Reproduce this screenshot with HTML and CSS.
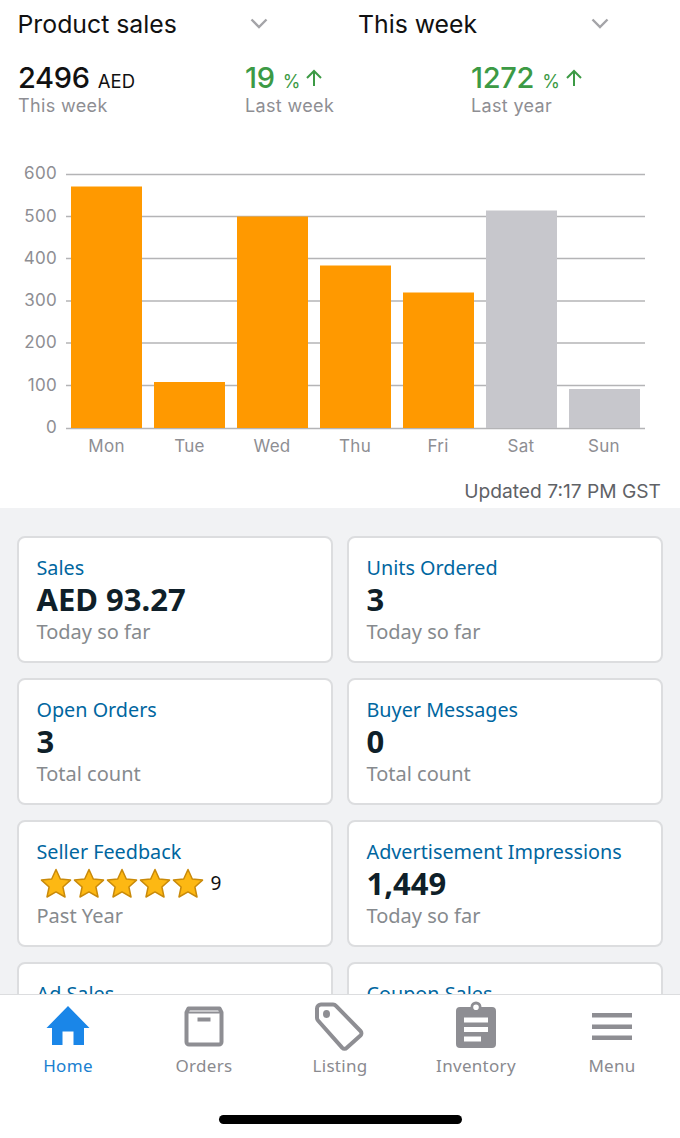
FILE: index.html
```html
<!DOCTYPE html>
<html lang="en">
<head>
<meta charset="utf-8">
<title>Seller dashboard</title>
<link rel="stylesheet" href="styles.css">
</head>
<body>
<div class="page">
  <section class="top">
    <div class="selectors">
      <div class="selector"><span>Product sales</span><svg class="chev" viewBox="0 0 18 11"><path d="M1.5 1.5 9 9l7.5-7.5" /></svg></div>
      <div class="selector"><span>This week</span><svg class="chev" viewBox="0 0 18 11"><path d="M1.5 1.5 9 9l7.5-7.5" /></svg></div>
    </div>
    <div class="stats">
      <div class="stat s1"><div class="num"><b>2496</b><small>AED</small></div><div class="cap">This week</div></div>
      <div class="stat s2 up"><div class="num"><b>19</b><small>%</small><svg class="arrow" viewBox="0 0 18 18"><path d="M9 17V2M2 9l7-7 7 7"/></svg></div><div class="cap">Last week</div></div>
      <div class="stat s3 up"><div class="num"><b>1272</b><small>%</small><svg class="arrow" viewBox="0 0 18 18"><path d="M9 17V2M2 9l7-7 7 7"/></svg></div><div class="cap">Last year</div></div>
    </div>
    <svg class="chart" viewBox="0 0 680 340" width="680" height="340">
      <g class="grid">
        <line x1="66" x2="645" y1="52.500" y2="52.500"/>
        <line x1="66" x2="645" y1="94.500" y2="94.500"/>
        <line x1="66" x2="645" y1="136.500" y2="136.500"/>
        <line x1="66" x2="645" y1="179" y2="179"/>
        <line x1="66" x2="645" y1="221" y2="221"/>
        <line x1="66" x2="645" y1="263.500" y2="263.500"/>
        <line x1="66" x2="645" y1="306.500" y2="306.500"/>
      </g>
      <g class="bars">
        <rect x="71" y="64.500" width="71" height="241.500"/>
        <rect x="154" y="260" width="71" height="46"/>
        <rect x="237" y="94.500" width="71" height="211.500"/>
        <rect x="320" y="143.500" width="71" height="162.500"/>
        <rect x="403" y="170.500" width="71" height="135.500"/>
        <rect class="future" x="486" y="88.500" width="71" height="217.500"/>
        <rect class="future" x="569" y="267" width="71" height="39"/>
      </g>
      <g class="ylabels">
        <text x="57" y="57">600</text><text x="57" y="100">500</text><text x="57" y="142">400</text><text x="57" y="184">300</text><text x="57" y="226">200</text><text x="57" y="269">100</text><text x="57" y="311">0</text>
      </g>
      <g class="xlabels">
        <text x="106.500" y="330">Mon</text><text x="189.500" y="330">Tue</text><text x="272" y="330">Wed</text><text x="355" y="330">Thu</text><text x="438" y="330">Fri</text><text x="521" y="330">Sat</text><text x="604" y="330">Sun</text>
      </g>
    </svg>
    <div class="updated">Updated 7:17 PM GST</div>
  </section>

  <main class="cards">
    <article class="card"><h2>Sales</h2><div class="value">AED 93.27</div><p>Today so far</p></article>
    <article class="card"><h2>Units Ordered</h2><div class="value">3</div><p>Today so far</p></article>
    <article class="card"><h2>Open Orders</h2><div class="value">3</div><p>Total count</p></article>
    <article class="card"><h2>Buyer Messages</h2><div class="value">0</div><p>Total count</p></article>
    <article class="card"><h2>Seller Feedback</h2>
      <div class="value stars">
        <svg class="star" viewBox="0 0 32 30"><path d="M16 1.500 20.300 11l10.200 1.100-7.600 6.900 2.100 10-9-5.100-9 5.100 2.100-10-7.600-6.900L11.700 11z"/></svg>
        <svg class="star" viewBox="0 0 32 30"><path d="M16 1.500 20.300 11l10.200 1.100-7.600 6.900 2.100 10-9-5.100-9 5.100 2.100-10-7.600-6.900L11.700 11z"/></svg>
        <svg class="star" viewBox="0 0 32 30"><path d="M16 1.500 20.300 11l10.200 1.100-7.600 6.900 2.100 10-9-5.100-9 5.100 2.100-10-7.600-6.900L11.700 11z"/></svg>
        <svg class="star" viewBox="0 0 32 30"><path d="M16 1.500 20.300 11l10.200 1.100-7.600 6.900 2.100 10-9-5.100-9 5.100 2.100-10-7.600-6.900L11.700 11z"/></svg>
        <svg class="star" viewBox="0 0 32 30"><path d="M16 1.500 20.300 11l10.200 1.100-7.600 6.900 2.100 10-9-5.100-9 5.100 2.100-10-7.600-6.900L11.700 11z"/></svg>
        <span class="count">9</span>
      </div><p>Past Year</p></article>
    <article class="card"><h2>Advertisement Impressions</h2><div class="value">1,449</div><p>Today so far</p></article>
    <article class="card"><h2>Ad Sales</h2></article>
    <article class="card"><h2>Coupon Sales</h2></article>
  </main>

  <nav class="tabs">
    <div class="tab active">
      <svg class="ico" viewBox="0 0 50 50"><path class="fill" d="M25 5 46.500 27H41V44H30.500V30.500H19.500V44H9V27H3.500z"/></svg>
      <span>Home</span></div>
    <div class="tab">
      <svg class="ico" viewBox="0 0 50 50"><path class="line" d="M9.500 7.500h31l2 4V41a2.500 2.500 0 0 1-2.500 2.500H10A2.500 2.500 0 0 1 7.500 41V11.500z"/><path class="line thin" d="M8 11.500h34"/><rect class="fill" x="18.500" y="16.500" width="13" height="4"/></svg>
      <span>Orders</span></div>
    <div class="tab">
      <svg class="ico" viewBox="0 0 50 50"><path class="line" d="M6.500 3.500h11.500a4 4 0 0 1 3 1.300l24.500 25.200a3.200 3.200 0 0 1 0 4.500L31.800 46.800a3.200 3.200 0 0 1-4.500 0L3 19.500a4 4 0 0 1-1-2.800V7.500A4 4 0 0 1 6.500 3.500z"/><ellipse class="fill" cx="11.500" cy="13" rx="3.500" ry="4"/></svg>
      <span>Listing</span></div>
    <div class="tab">
      <svg class="ico" viewBox="0 0 50 50"><path class="fill" fill-rule="evenodd" d="M9 6h10.500a5.500 5.500 0 0 1 11 0H41a4 4 0 0 1 4 4v33a4 4 0 0 1-4 4H9a4 4 0 0 1-4-4V10a4 4 0 0 1 4-4zM25 3.500a2.800 2.800 0 1 0 0 5.600 2.800 2.800 0 0 0 0-5.600zM13 16.500v5h24v-5zM13 26v5h24v-5zM13 35.500v5h17v-5z"/></svg>
      <span>Inventory</span></div>
    <div class="tab">
      <svg class="ico" viewBox="0 0 50 50"><path class="fill" d="M5 12h40v4.500H5zM5 23.500h40V28H5zM5 34.500h40V39H5z"/></svg>
      <span>Menu</span></div>
    <div class="homebar"></div>
  </nav>
</div>
</body>
</html>
```
FILE: styles.css
```css
* { box-sizing: border-box; }
html, body { margin: 0; padding: 0; background: #fff; }
.page {
  width: 680px; height: 1138px; overflow: hidden;
  display: flex; flex-direction: column;
  font-family: "Inter", "Liberation Sans", sans-serif;
}
.top { height: 508px; flex: none; background: #fff; }
.selectors { display: grid; grid-template-columns: 340.500px 340px; padding: 8px 0 0 17.500px; height: 62px; }
.selector { display: flex; align-items: flex-start; justify-content: space-between; width: 250.500px; font-size: 24.800px; line-height: 32px; color: #111; font-weight: 400; }
.chev { width: 18px; height: 11px; margin-top: 10px; flex: none; }
.chev path { fill: none; stroke: #a4a4a8; stroke-width: 2.4; }
.stats { display: grid; grid-template-columns: 227px 226px 200px; padding-left: 18px; }
.num { display: flex; align-items: baseline; height: 32px; line-height: 32px; color: #111; white-space: pre; }
.num b { font-weight: 500; font-size: 29px; letter-spacing: -0.3px; }
.num small { font-size: 18px; margin-left: 8px; font-weight: 400; }
.s1 .num small { font-size: 18.500px; }
.up .num { color: #3c9a45; }
.arrow { width: 18px; height: 18px; margin-left: 5px; align-self: center; flex: none; }
.arrow path { fill: none; stroke: #3c9a45; stroke-width: 2; }
.cap { font-size: 18px; line-height: 24px; color: #8e8e93; letter-spacing: 0.35px; }
.chart { display: block; margin-top: 4px; }
.grid line { stroke: #b4b4b6; stroke-width: 1.3; }
.bars rect { fill: #ff9900; }
.bars rect.future { fill: #c7c7cc; }
.ylabels text { font-size: 17px; letter-spacing: 0.3px; fill: #8e8e93; text-anchor: end; }
.xlabels text { font-size: 17px; letter-spacing: 0.3px; fill: #8e8e93; text-anchor: middle; }
.updated { text-align: right; padding-right: 19px; font-size: 19.200px; line-height: 24px; color: #5f6266; margin-top: 17px; font-weight: 400; }

.cards {
  flex: 1; min-height: 0; overflow: hidden; background: #f1f2f4;
  display: grid; grid-template-columns: 316px 316px; column-gap: 14px; row-gap: 15px;
  grid-auto-rows: 127px; padding: 28px 17px 0;
  font-family: "Noto Sans", "Open Sans", sans-serif;
}
.card { background: #fff; border: 2px solid #dcdddf; border-radius: 8px; padding: 18px 17.500px 0; }
.card h2 { margin: 0; font-size: 19.800px; font-weight: 400; line-height: 24px; color: #00669f; white-space: nowrap; }
.value { font-size: 31px; font-weight: 700; line-height: 38px; height: 38px; color: #0f1f29; }
.card p { margin: 2px 0 0; font-size: 20px; line-height: 24px; color: #868a8e; }
.stars { display: flex; align-items: center; gap: 1px; padding-left: 3px; }
.star { width: 32px; height: 30px; flex: none; }
.star path { fill: #fdb813; stroke: #c98a0a; stroke-width: 1.5; stroke-linejoin: round; }
.count { font-size: 19px; font-weight: 400; color: #111; margin-left: 6px; }

.tabs {
  flex: none; height: 144px; background: #fff; border-top: 1px solid #dcdddf;
  display: grid; grid-template-columns: repeat(5, 136px); grid-template-rows: 92px 1fr;
  font-family: "Noto Sans", "Open Sans", sans-serif;
}
.tab { display: flex; flex-direction: column; align-items: center; padding-top: 6px; font-size: 17px; line-height: 22px; color: #8a8a8f; letter-spacing: 0.3px; }
.tab.active { color: #1a80d0; }
.ico { width: 50px; height: 50px; flex: none; margin-bottom: 4px; }
.ico .fill { fill: #8e8e93; }
.ico .line { fill: none; stroke: #8e8e93; stroke-width: 4; stroke-linejoin: round; }
.ico .thin { stroke-width: 2; }
.tab.active .ico .fill { fill: #1a86e8; }
.homebar { grid-column: 1 / -1; justify-self: center; align-self: start; margin-top: 28px; width: 243px; height: 9px; background: #000; border-radius: 5px; }
```
